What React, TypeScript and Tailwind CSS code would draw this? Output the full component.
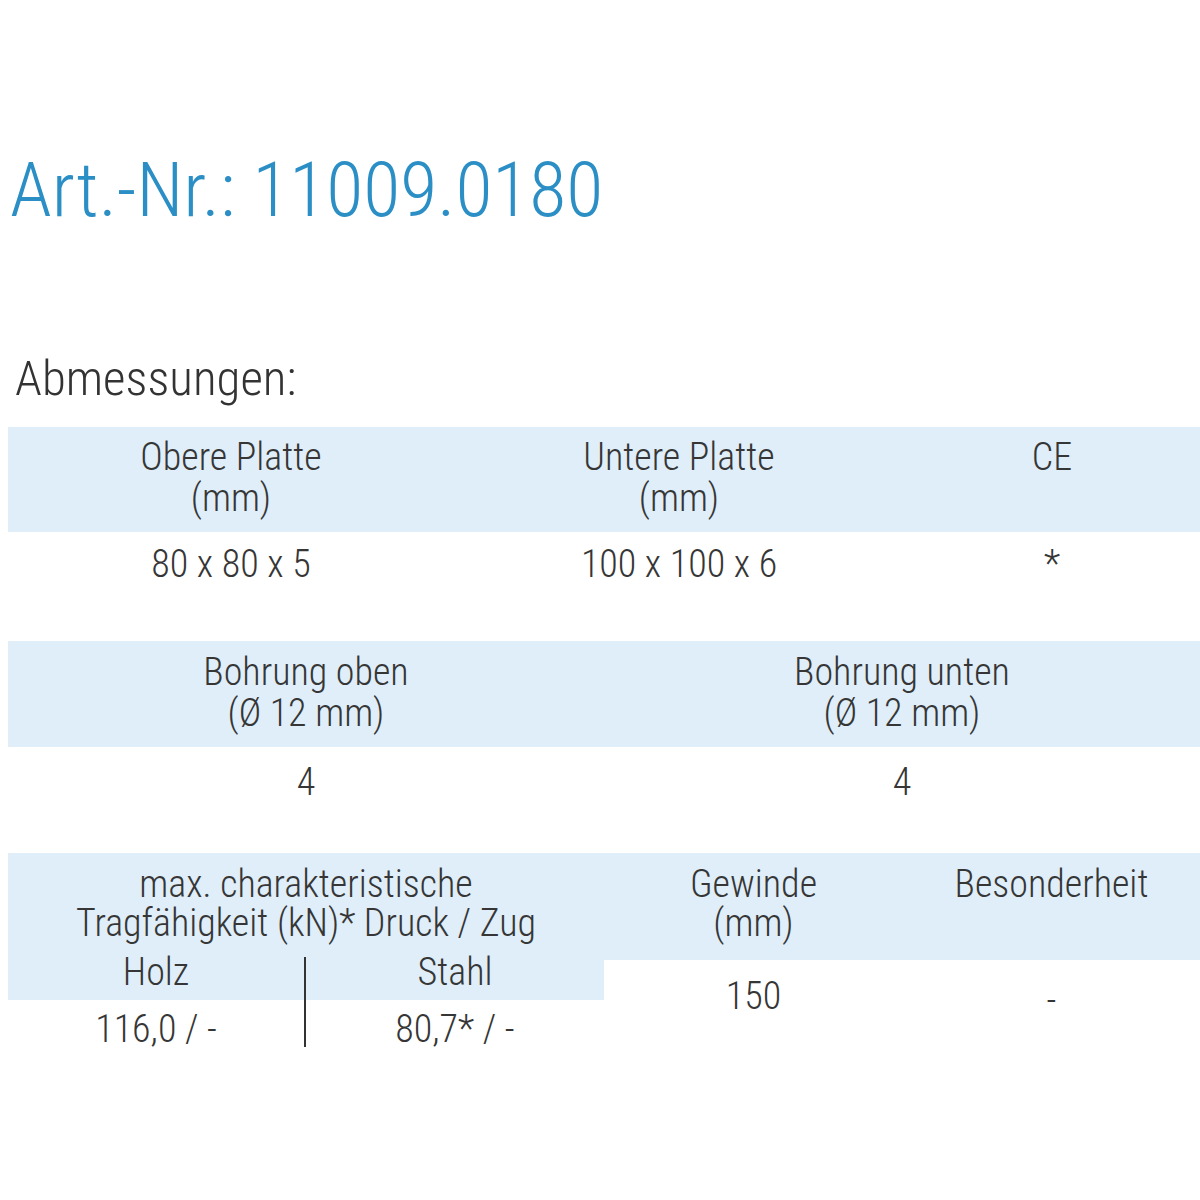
import React from 'react';

const font = "font-['Liberation_Sans_Narrow','Roboto_Condensed','DejaVu_Sans_Condensed',Roboto,sans-serif]";

export default function App() {
  return (
    <div className={`w-[1200px] min-h-[1200px] bg-white pl-[8px] text-[#363636] font-light ${font}`}>
      {/* Title */}
      <h1 className="pt-[152px] pl-[2px] text-[76px] leading-none text-[#2b8fc6] font-light">
        Art.-Nr.: 11009.0180
      </h1>

      <h2 className="mt-[126px] pl-[7px] text-[49px] leading-none text-[#333]">Abmessungen:</h2>

      {/* Table 1 */}
      <div className="mt-[24px] grid grid-cols-[446px_450px_1fr] text-center text-[38px] leading-[41px]">
        <div className="bg-[#dfeef9] pt-[10px] pb-[13px]">
          Obere Platte
          <br />
          (mm)
        </div>
        <div className="bg-[#dfeef9] pt-[10px] pb-[13px]">
          Untere Platte
          <br />
          (mm)
        </div>
        <div className="bg-[#dfeef9] pt-[10px] pb-[13px]">CE</div>
        <div className="pt-[12px]">80 x 80 x 5</div>
        <div className="pt-[12px]">100 x 100 x 6</div>
        <div className="pt-[12px]">*</div>
      </div>

      {/* Table 2 */}
      <div className="mt-[56px] grid grid-cols-[596px_1fr] text-center text-[38px] leading-[41px]">
        <div className="bg-[#dfeef9] pt-[11px] pb-[13px]">
          Bohrung oben
          <br />
          (Ø 12 mm)
        </div>
        <div className="bg-[#dfeef9] pt-[11px] pb-[13px]">
          Bohrung unten
          <br />
          (Ø 12 mm)
        </div>
        <div className="pt-[15px]">4</div>
        <div className="pt-[15px]">4</div>
      </div>

      {/* Table 3 */}
      <div className="mt-[50px] flex text-center text-[38px]">
        <div className="w-[596px]">
          <div className="bg-[#dfeef9] pt-[12px] pb-[14px] leading-[39px]">
            max. charakteristische
            <br />
            Tragfähigkeit (kN)* Druck / Zug
          </div>
          <div className="grid grid-cols-2 leading-[30px]">
            <div className="bg-[#dfeef9] pb-[13px] border-r-2 border-[#333]">Holz</div>
            <div className="bg-[#dfeef9] pb-[13px]">Stahl</div>
            <div className="pt-[12px] leading-[35px] border-r-2 border-[#333]">116,0 / -</div>
            <div className="pt-[12px] leading-[35px]">80,7* / -</div>
          </div>
        </div>
        <div className="flex-1 grid grid-cols-[299px_1fr] content-start leading-[39px]">
          <div className="bg-[#dfeef9] pt-[12px] pb-[17px]">
            Gewinde
            <br />
            (mm)
          </div>
          <div className="bg-[#dfeef9] pt-[12px] pb-[17px]">Besonderheit</div>
          <div className="pt-[17px]">150</div>
          <div className="pt-[21px]">-</div>
        </div>
      </div>
    </div>
  );
}
